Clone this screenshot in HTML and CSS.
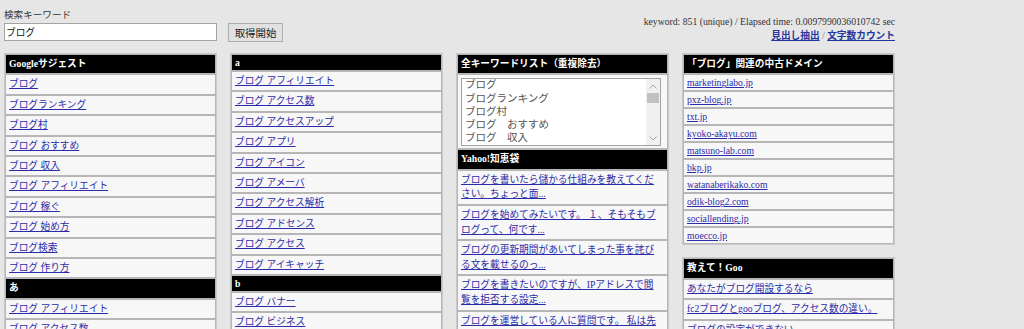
FILE: index.html
```html
<!DOCTYPE html>
<html lang="ja">
<head>
<meta charset="utf-8">
<title>キーワード取得</title>
<link rel="stylesheet" href="styles.css">
</head>
<body>
<div class="page">
  <header class="top">
    <form class="search">
      <label class="search-label" for="kw">検索キーワード</label>
      <div class="search-row">
        <input id="kw" class="search-input" type="text" value="ブログ">
        <button class="search-btn" type="button">取得開始</button>
      </div>
    </form>
    <div class="info">
      <p class="info-line">keyword: 851 (unique) / Elapsed time: 0.0097990036010742 sec</p>
      <p class="info-line"><a class="info-link" href="#">見出し抽出</a> <span class="sep">/</span> <a class="info-link" href="#">文字数カウント</a></p>
    </div>
  </header>

  <main class="cols">
    <section class="col">
      <div class="tbl">
        <div class="hd">Googleサジェスト</div>
        <div class="cell"><a href="#">ブログ</a></div>
        <div class="cell"><a href="#">ブログランキング</a></div>
        <div class="cell"><a href="#">ブログ村</a></div>
        <div class="cell"><a href="#">ブログ おすすめ</a></div>
        <div class="cell"><a href="#">ブログ 収入</a></div>
        <div class="cell"><a href="#">ブログ アフィリエイト</a></div>
        <div class="cell"><a href="#">ブログ 稼ぐ</a></div>
        <div class="cell"><a href="#">ブログ 始め方</a></div>
        <div class="cell"><a href="#">ブログ検索</a></div>
        <div class="cell"><a href="#">ブログ 作り方</a></div>
        <div class="hd">あ</div>
        <div class="cell"><a href="#">ブログ アフィリエイト</a></div>
        <div class="cell"><a href="#">ブログ アクセス数</a></div>
        <div class="cell"><a href="#">ブログ アクセスアップ</a></div>
        <div class="cell"><a href="#">ブログ アプリ</a></div>
      </div>
    </section>

    <section class="col">
      <div class="tbl">
        <div class="hd en">a</div>
        <div class="cell"><a href="#">ブログ アフィリエイト</a></div>
        <div class="cell"><a href="#">ブログ アクセス数</a></div>
        <div class="cell"><a href="#">ブログ アクセスアップ</a></div>
        <div class="cell"><a href="#">ブログ アプリ</a></div>
        <div class="cell"><a href="#">ブログ アイコン</a></div>
        <div class="cell"><a href="#">ブログ アメーバ</a></div>
        <div class="cell"><a href="#">ブログ アクセス解析</a></div>
        <div class="cell"><a href="#">ブログ アドセンス</a></div>
        <div class="cell"><a href="#">ブログ アクセス</a></div>
        <div class="cell"><a href="#">ブログ アイキャッチ</a></div>
        <div class="hd en">b</div>
        <div class="cell"><a href="#">ブログ バナー</a></div>
        <div class="cell"><a href="#">ブログ ビジネス</a></div>
        <div class="cell"><a href="#">ブログ ブログ</a></div>
      </div>
    </section>

    <section class="col">
      <div class="tbl">
        <div class="hd">全キーワードリスト（重複除去）</div>
        <div class="cell ta-cell">
          <div class="ta-box">
            <div class="ta-clip">
<textarea class="ta" readonly>
ブログ
ブログランキング
ブログ村
ブログ　おすすめ
ブログ　収入
ブログ　アフィリエイト
ブログ　稼ぐ
ブログ　始め方</textarea>
            </div>
            <div class="sb">
              <div class="sb-btn"><svg width="8" height="5" viewBox="0 0 8 5"><path d="M0.5 4.5 L4 1 L7.5 4.5" fill="none" stroke="#a3a3a3"/></svg></div>
              <div class="sb-thumb"></div>
              <div class="sb-space"></div>
              <div class="sb-btn"><svg width="8" height="5" viewBox="0 0 8 5"><path d="M0.5 0.5 L4 4 L7.5 0.5" fill="none" stroke="#a3a3a3"/></svg></div>
            </div>
          </div>
        </div>
        <div class="hd">Yahoo!知恵袋</div>
        <div class="cell qa"><a href="#">ブログを書いたら儲かる仕組みを教えてください。ちょっと面...</a></div>
        <div class="cell qa"><a href="#">ブログを始めてみたいです。 １、そもそもブログって、何です...</a></div>
        <div class="cell qa"><a href="#">ブログの更新期間があいてしまった事を詫びる文を載せるのっ...</a></div>
        <div class="cell qa"><a href="#">ブログを書きたいのですが、IPアドレスで閲覧を拒否する設定...</a></div>
        <div class="cell qa"><a href="#">ブログを運営している人に質問です。 私は先日ブログを始めた...</a></div>
      </div>
    </section>

    <section class="col">
      <div class="tbl">
        <div class="hd">「ブログ」関連の中古ドメイン</div>
        <div class="cell en"><a href="#">marketinglabo.jp</a></div>
        <div class="cell en"><a href="#">pxz-blog.jp</a></div>
        <div class="cell en"><a href="#">txt.jp</a></div>
        <div class="cell en"><a href="#">kyoko-akayu.com</a></div>
        <div class="cell en"><a href="#">matsuno-lab.com</a></div>
        <div class="cell en"><a href="#">bkp.jp</a></div>
        <div class="cell en"><a href="#">watanaberikako.com</a></div>
        <div class="cell en"><a href="#">odik-blog2.com</a></div>
        <div class="cell en"><a href="#">sociallending.jp</a></div>
        <div class="cell en"><a href="#">moecco.jp</a></div>
      </div>
      <div class="tbl">
        <div class="hd">教えて！Goo</div>
        <div class="cell"><a href="#">あなたがブログ開設するなら</a></div>
        <div class="cell"><a href="#">fc2ブログとgooブログ、アクセス数の違い。</a></div>
        <div class="cell"><a href="#">ブログの設定ができない</a></div>
        <div class="cell"><a href="#">ブログの書き方について</a></div>
      </div>
    </section>
  </main>
</div>
</body>
</html>
```

FILE: styles.css
```css
* {
  box-sizing: border-box;
}

html,
body {
  margin: 0;
  padding: 0;
  overflow: hidden;
}

body {
  background: #e6e6e6;
  color: #333;
  font-family: "Liberation Serif", "Noto Sans CJK JP", serif;
  font-size: 9.7px;
}

a {
  color: #2c2ca8;
}

.page {
  width: 895px;
  padding-left: 4px;
}

/* ---------- top bar ---------- */
.top {
  display: flex;
  justify-content: space-between;
  height: 53px;
}

.search {
  margin: 0;
  padding-top: 7px;
}

.search-label {
  display: block;
  font-family: "Noto Sans CJK JP", sans-serif;
  font-size: 9.6px;
  line-height: 14px;
  color: #333;
}

.search-row {
  display: flex;
  gap: 11px;
  margin-top: 2px;
}

.search-input {
  width: 213px;
  height: 18px;
  margin: 0;
  padding: 0 1px;
  border: 1px solid #a3a3a3;
  background: #fff;
  font-family: "Noto Sans CJK JP", sans-serif;
  font-size: 9.7px;
  color: #111;
  outline: none;
}

.search-btn {
  width: 55px;
  height: 19px;
  margin: 0;
  padding: 0;
  border: 1px solid #adadad;
  background: #e1e1e1;
  font-family: "Noto Sans CJK JP", sans-serif;
  font-size: 10.4px;
  color: #222;
}

.info {
  padding-top: 15px;
  text-align: right;
}

.info-line {
  margin: 0;
  line-height: 13.8px;
  white-space: nowrap;
}

.info-link {
  font-weight: bold;
  color: #23359f;
}

.sep {
  color: #777;
}

/* ---------- columns ---------- */
.cols {
  display: flex;
  gap: 13px;
  align-items: flex-start;
}

.col {
  width: 213px;
  flex: none;
}

.tbl {
  border: 1px solid #c9c9c9;
  background: #f7f7f7;
}

.tbl + .tbl {
  margin-top: 12px;
}

.hd,
.cell {
  border: 1px solid #b6b6b6;
  padding: 2px 6px 2px 3px;
  line-height: 14.4px;
}

.hd {
  background: #000;
  color: #fff;
  font-weight: bold;
}

.en {
  line-height: 11px;
}

.qa {
  line-height: 14.6px;
}

/* ---------- keyword list box ---------- */
.ta-cell {
  padding-top: 3px;
  padding-bottom: 2px;
}

.ta-box {
  display: flex;
  height: 68px;
  border: 1px solid #a2a2a2;
  background: #fff;
}

.ta-clip {
  flex: 1;
  overflow: hidden;
}

.ta {
  display: block;
  width: 100%;
  height: 70px;
  margin: -2px 0 0;
  padding: 0 3px;
  border: 0;
  resize: none;
  overflow: hidden;
  background: transparent;
  font-family: "Noto Sans CJK JP", sans-serif;
  font-size: 10.5px;
  line-height: 13.25px;
  color: #555;
  outline: none;
}

.sb {
  width: 14px;
  display: flex;
  flex-direction: column;
  background: #f0f0f0;
}

.sb-btn {
  height: 14px;
  display: flex;
  align-items: center;
  justify-content: center;
}

.sb-thumb {
  height: 10px;
  margin: 0 1px;
  background: #c1c1c1;
}

.sb-space {
  flex: 1;
}
```
